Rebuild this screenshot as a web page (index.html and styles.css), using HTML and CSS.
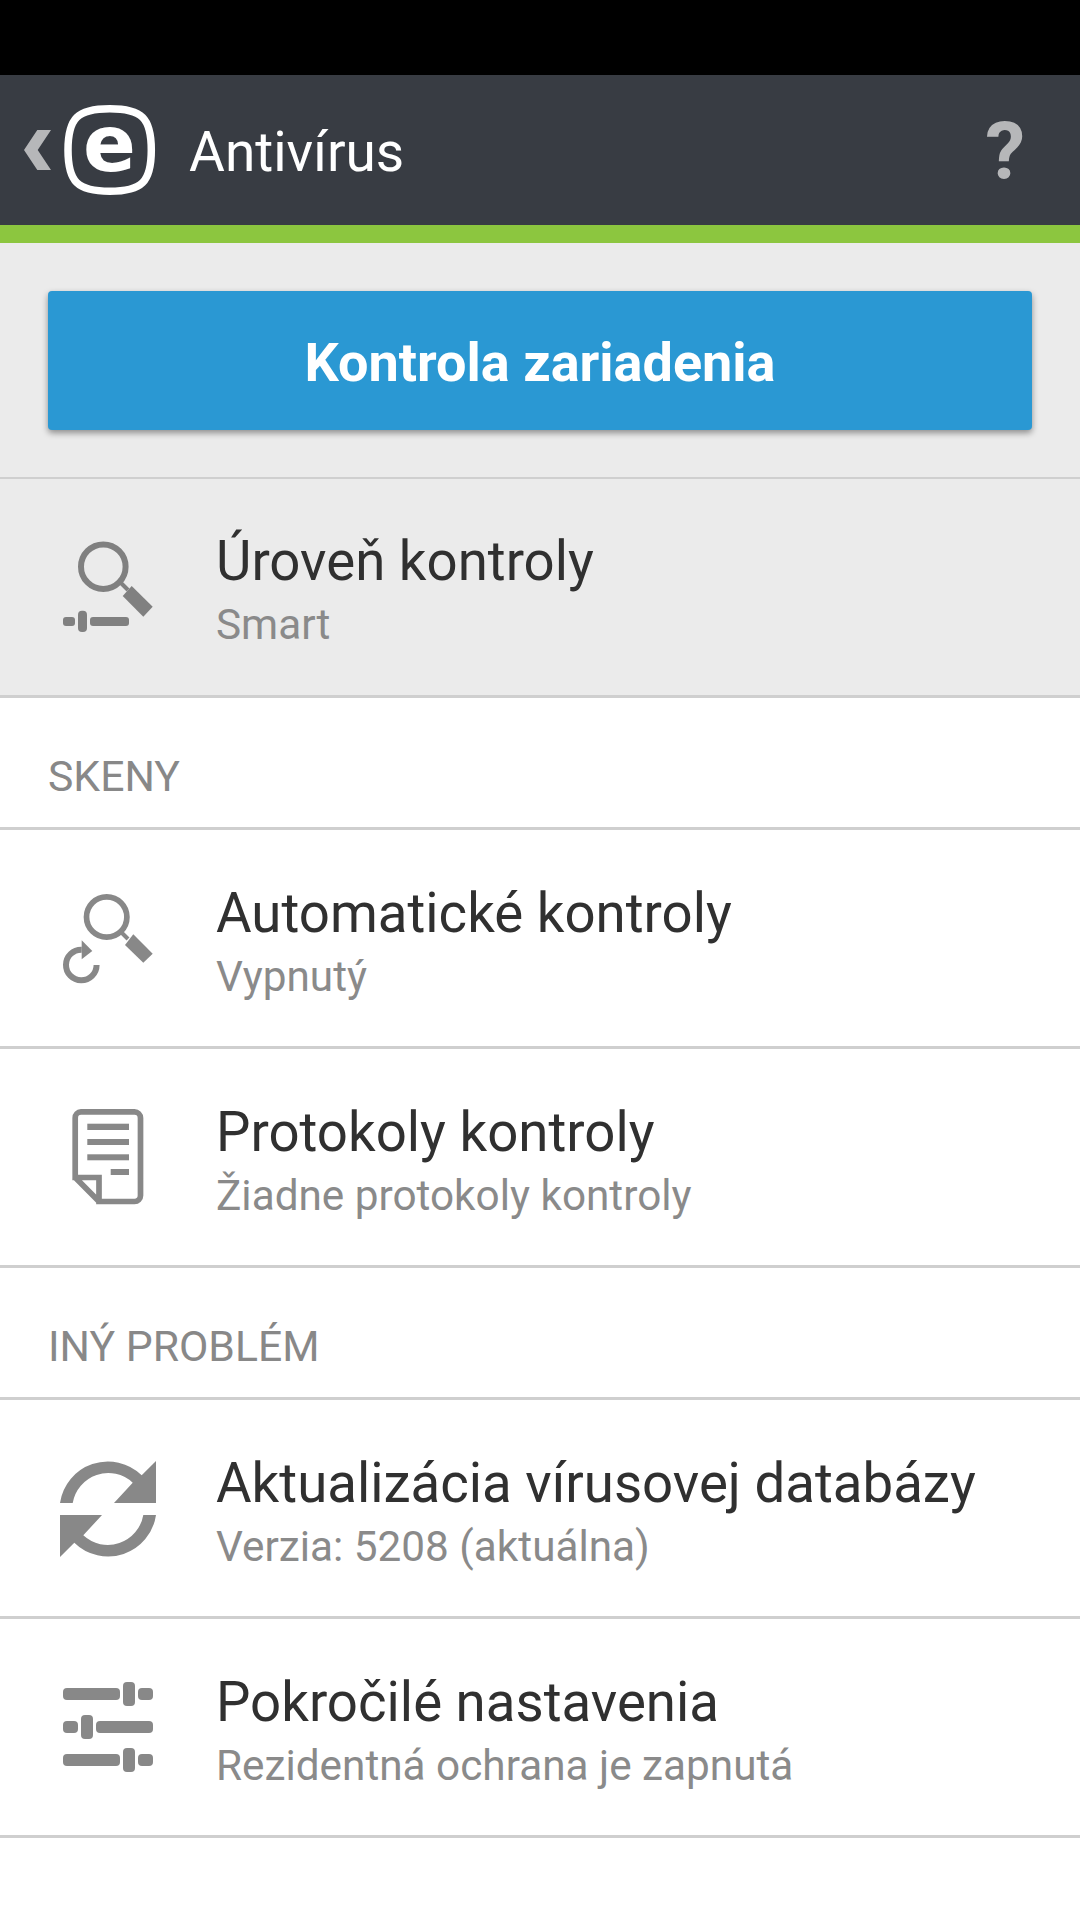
FILE: index.html
```html
<!DOCTYPE html>
<html lang="sk">
<head>
    <meta charset="UTF-8">
    <title>Antivírus</title>
    <link rel="stylesheet" href="styles.css">
</head>
<body>
    <div class="status-bar"></div>
    <div class="header">
        <svg class="logo" viewBox="0 0 170 150" width="170" height="150">
            <polygon fill="#b6b7b9" points="37.3,55 51,55 37.7,75 51,95 37.3,95 24,75"/>
            <path fill="none" stroke="#fff" stroke-width="7.5" d="M109.7 33.7 C142 33.7 151.3 43 151.3 75 C151.3 107 142 116.3 109.7 116.3 C77.5 116.3 68 107 68 75 C68 43 77.5 33.7 109.7 33.7 Z"/>
            <text class="logo-e" x="109.5" y="96" text-anchor="middle">e</text>
        </svg>
        <div class="header-title">Antivírus</div>
        <div class="help">?</div>
    </div>
    <div class="green-line"></div>

    <div class="top-box">
        <div class="scan-btn">Kontrola zariadenia</div>
    </div>

    <div class="row row-grey">
        <svg class="icon" viewBox="0 0 140 140" width="140" height="140">
            <circle cx="63.3" cy="46.7" r="22.3" fill="none" stroke="#808080" stroke-width="6"/>
            <path d="M81 63 L88 70" stroke="#808080" stroke-width="4"/>
            <polygon fill="#808080" points="91.7,66 112.7,86.7 103.3,96.7 82.7,76"/>
            <rect x="23" y="97" width="12" height="9" rx="3" fill="#808080"/>
            <rect x="38" y="90.7" width="9" height="21.3" rx="4" fill="#808080"/>
            <rect x="50" y="97" width="39" height="9" rx="3" fill="#808080"/>
        </svg>
        <div class="row-text">
            <div class="row-title">Úroveň kontroly</div>
            <div class="row-sub">Smart</div>
        </div>
    </div>

    <div class="section">SKENY</div>

    <div class="row">
        <svg class="icon" viewBox="0 0 140 140" width="140" height="140">
            <circle cx="66.7" cy="46" r="20.2" fill="none" stroke="#888" stroke-width="5.7"/>
            <path d="M82 62 L88 68" stroke="#888" stroke-width="4"/>
            <polygon fill="#888" points="93.3,63.3 112.7,82.7 103.3,91.7 85,74"/>
            <path d="M56.6 94 A15.3 15.3 0 1 1 41.7 78.7" fill="none" stroke="#888" stroke-width="6"/>
            <polygon fill="#888" points="41.7,69.3 52.3,80 41.7,88.3"/>
        </svg>
        <div class="row-text">
            <div class="row-title">Automatické kontroly</div>
            <div class="row-sub">Vypnutý</div>
        </div>
    </div>

    <div class="row">
        <svg class="icon" viewBox="0 0 140 140" width="140" height="140">
            <path d="M41 21.9 H94.5 A6 6 0 0 1 100.5 27.9 V105.5 A6 6 0 0 1 94.5 111.5 H59 V87.5 H35.2 V28 A6 6 0 0 1 41 21.9 Z M35.2 87.5 L59 111.5" fill="none" stroke="#888" stroke-width="5.7"/>
            <rect x="47.3" y="33.7" width="41.7" height="6.3" fill="#888"/>
            <rect x="47.3" y="49" width="41.7" height="6" fill="#888"/>
            <rect x="47.3" y="64.3" width="41.7" height="6" fill="#888"/>
            <rect x="70.7" y="79" width="18.3" height="6" fill="#888"/>
        </svg>
        <div class="row-text">
            <div class="row-title">Protokoly kontroly</div>
            <div class="row-sub">Žiadne protokoly kontroly</div>
        </div>
    </div>

    <div class="section">INÝ PROBLÉM</div>

    <div class="row">
        <svg class="icon" viewBox="0 0 140 140" width="140" height="140">
            <path fill="#888" d="M20 62 A48.4 48.4 0 0 1 101.7 34.3 L116 20 V62 H74 L92.7 41.7 A36 36 0 0 0 32.7 62 Z"/>
            <path fill="#888" transform="rotate(180 68 68)" d="M20 62 A48.4 48.4 0 0 1 101.7 34.3 L116 20 V62 H74 L92.7 41.7 A36 36 0 0 0 32.7 62 Z"/>
        </svg>
        <div class="row-text">
            <div class="row-title">Aktualizácia vírusovej databázy</div>
            <div class="row-sub">Verzia: 5208 (aktuálna)</div>
        </div>
    </div>

    <div class="row">
        <svg class="icon" viewBox="0 0 140 140" width="140" height="140">
            <g fill="#888">
                <rect x="23" y="28" width="57" height="12" rx="4"/>
                <rect x="83" y="22" width="12" height="24" rx="4"/>
                <rect x="98" y="28" width="15" height="12" rx="4"/>
                <rect x="23" y="61" width="15" height="12" rx="4"/>
                <rect x="41" y="55" width="12" height="24" rx="4"/>
                <rect x="56" y="61" width="57" height="12" rx="4"/>
                <rect x="23" y="94" width="57" height="12" rx="4"/>
                <rect x="83" y="88" width="12" height="24" rx="4"/>
                <rect x="98" y="94" width="15" height="12" rx="4"/>
            </g>
        </svg>
        <div class="row-text">
            <div class="row-title">Pokročilé nastavenia</div>
            <div class="row-sub">Rezidentná ochrana je zapnutá</div>
        </div>
    </div>
</body>
</html>
```

FILE: styles.css
```css
body{
    margin: 0;
    background-color: #fff;
    font-family: Roboto, "Liberation Sans", sans-serif;
    color: #303030;
}
.status-bar{
    height: 75px;
    background-color: #000;
}
.header{
    height: 150px;
    background-color: #383c43;
    display: flex;
    align-items: center;
}
.logo{
    flex: none;
}
.logo-e{
    font-family: "DejaVu Sans", sans-serif;
    font-weight: bold;
    font-size: 78px;
    fill: #fff;
}
.header-title{
    margin-left: 19px;
    padding-top: 4px;
    font-size: 55px;
    color: #fff;
    flex: 1;
}
.help{
    margin-right: 55px;
    padding-top: 4px;
    font-size: 80px;
    font-weight: bold;
    color: #b6b7b9;
}
.green-line{
    height: 18px;
    background-color: #8cc63f;
}
.top-box{
    height: 236px;
    box-sizing: border-box;
    background-color: #ebebeb;
    padding: 48px 48px 0;
    border-bottom: 2px solid #cfcfcf;
}
.scan-btn{
    height: 139px;
    line-height: 144px;
    background-color: #2a98d3;
    border-radius: 4px;
    box-shadow: 0 3px 6px rgba(0,0,0,.4);
    color: #fff;
    font-size: 54px;
    font-weight: bold;
    text-align: center;
}
.row{
    height: 219px;
    box-sizing: border-box;
    display: flex;
    align-items: center;
    padding: 6px 0 0 40px;
    border-bottom: 3px solid #cfcfcf;
}
.row-grey{
    background-color: #ebebeb;
}
.icon{
    flex: none;
    margin-right: 36px;
}
.row-title{
    font-size: 54.6px;
    line-height: 64px;
}
.row-grey .row-title{
    margin-top: -2px;
}
.row-sub{
    margin-top: 8px;
    font-size: 42.3px;
    line-height: 48px;
    color: #8a8a8a;
}
.section{
    height: 132px;
    box-sizing: border-box;
    padding: 48px 0 0 48px;
    font-size: 42.7px;
    line-height: 60px;
    color: #888;
    border-bottom: 3px solid #cfcfcf;
}
```
